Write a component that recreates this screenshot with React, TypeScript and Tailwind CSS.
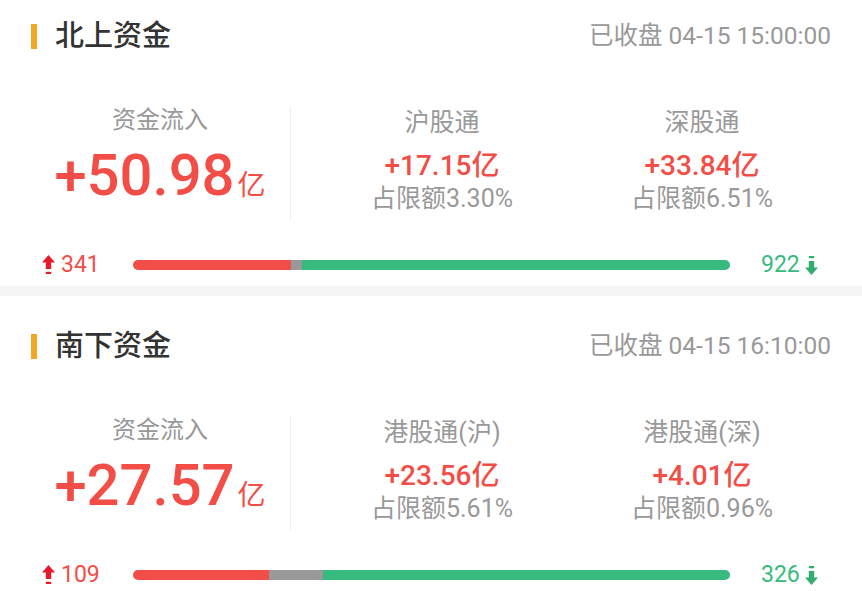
import React from "react";

type Col = { name: string; value: string; pct: string };
type Section = {
  title: string;
  time: string;
  total: string;
  cols: Col[];
  up: number;
  flat: number;
  down: number;
};

const sections: Section[] = [
  {
    title: "北上资金",
    time: "已收盘 04-15 15:00:00",
    total: "+50.98",
    cols: [
      { name: "沪股通", value: "+17.15", pct: "3.30%" },
      { name: "深股通", value: "+33.84", pct: "6.51%" },
    ],
    up: 341,
    flat: 24,
    down: 922,
  },
  {
    title: "南下资金",
    time: "已收盘 04-15 16:10:00",
    total: "+27.57",
    cols: [
      { name: "港股通(沪)", value: "+23.56", pct: "5.61%" },
      { name: "港股通(深)", value: "+4.01", pct: "0.96%" },
    ],
    up: 109,
    flat: 43,
    down: 326,
  },
];

function UpArrow() {
  return (
    <svg width="13" height="20" viewBox="0 0 13 20" className="shrink-0">
      <path d="M6.5 0 L13 7.5 L9.2 7.5 L9.2 14 L3.8 14 L3.8 7.5 L0 7.5 Z" fill="#E8192C" />
      <rect x="3.8" y="16.8" width="5.4" height="2.2" fill="#E8192C" />
    </svg>
  );
}

function DownArrow() {
  return (
    <svg width="13" height="20" viewBox="0 0 13 20" className="shrink-0">
      <rect x="3.8" y="1" width="5.4" height="2.2" fill="#2FAE6E" />
      <path d="M6.5 20 L13 12.5 L9.2 12.5 L9.2 6 L3.8 6 L3.8 12.5 L0 12.5 Z" fill="#2FAE6E" />
    </svg>
  );
}

function FlowSection({ s, first }: { s: Section; first: boolean }) {
  const total = s.up + s.flat + s.down;
  return (
    <div className={`${first ? "pt-[18px]" : "pt-[32px]"} pb-[9px] bg-white`}>
      {/* header */}
      <div className="flex items-center h-[36px] pl-[31px] pr-[31px]">
        <div className="w-[6px] h-[25px] bg-[#F5A623]" />
        <div className="ml-[18px] text-[29px] leading-[36px] font-medium text-[#333]">{s.title}</div>
        <div className="ml-auto text-[24.5px] leading-[36px] text-[#999]">{s.time}</div>
      </div>

      {/* stats */}
      <div className="flex mt-[52px] pl-[30px] h-[114px]">
        <div className="w-[260px] flex flex-col items-center">
          <div className="text-[24px] leading-[28px] text-[#999]">资金流入</div>
          <div className="mt-[12px] flex items-baseline text-[#F24E47]">
            <span className="text-[58px] leading-[58px] font-medium">{s.total}</span>
            <span className="text-[28px] ml-[3px]">亿</span>
          </div>
        </div>
        <div className="w-px bg-[#eeeeee]" />
        <div className="ml-[21px] flex">
          {s.cols.map((c) => (
            <div key={c.name} className="w-[260px] flex flex-col items-center pt-[2px]">
              <div className="text-[25px] leading-[30px] text-[#999]">{c.name}</div>
              <div className="mt-[11px] text-[28px] leading-[34px] font-medium text-[#F24E47]">
                {c.value}亿
              </div>
              <div className="text-[25px] leading-[31px] text-[#999]">占限额{c.pct}</div>
            </div>
          ))}
        </div>
      </div>

      {/* up / down bar */}
      <div className="flex items-center mt-[32px] h-[25px] pl-[42px]">
        <div className="w-[91px] flex items-center gap-[6px]">
          <UpArrow />
          <span className="text-[23px] leading-[25px] text-[#F24E47]">{s.up}</span>
        </div>
        <div className="flex-1 flex h-[10px] rounded-full overflow-hidden">
          <div className="bg-[#F24E47]" style={{ width: `${(s.up / total) * 100}%` }} />
          <div className="bg-[#999]" style={{ width: `${(s.flat / total) * 100}%` }} />
          <div className="bg-[#36BA7E]" style={{ width: `${(s.down / total) * 100}%` }} />
        </div>
        <div className="w-[132px] pl-[31px] flex items-center gap-[5px]">
          <span className="text-[23px] leading-[25px] text-[#36BA7E]">{s.down}</span>
          <DownArrow />
        </div>
      </div>
    </div>
  );
}

export default function App() {
  return (
    <div className="w-[862px] h-[591px] overflow-hidden bg-white font-[Roboto,'Noto_Sans_CJK_SC',sans-serif]">
      <FlowSection s={sections[0]} first />
      <div className="h-[10px] bg-[#f5f5f5]" />
      <FlowSection s={sections[1]} first={false} />
    </div>
  );
}
